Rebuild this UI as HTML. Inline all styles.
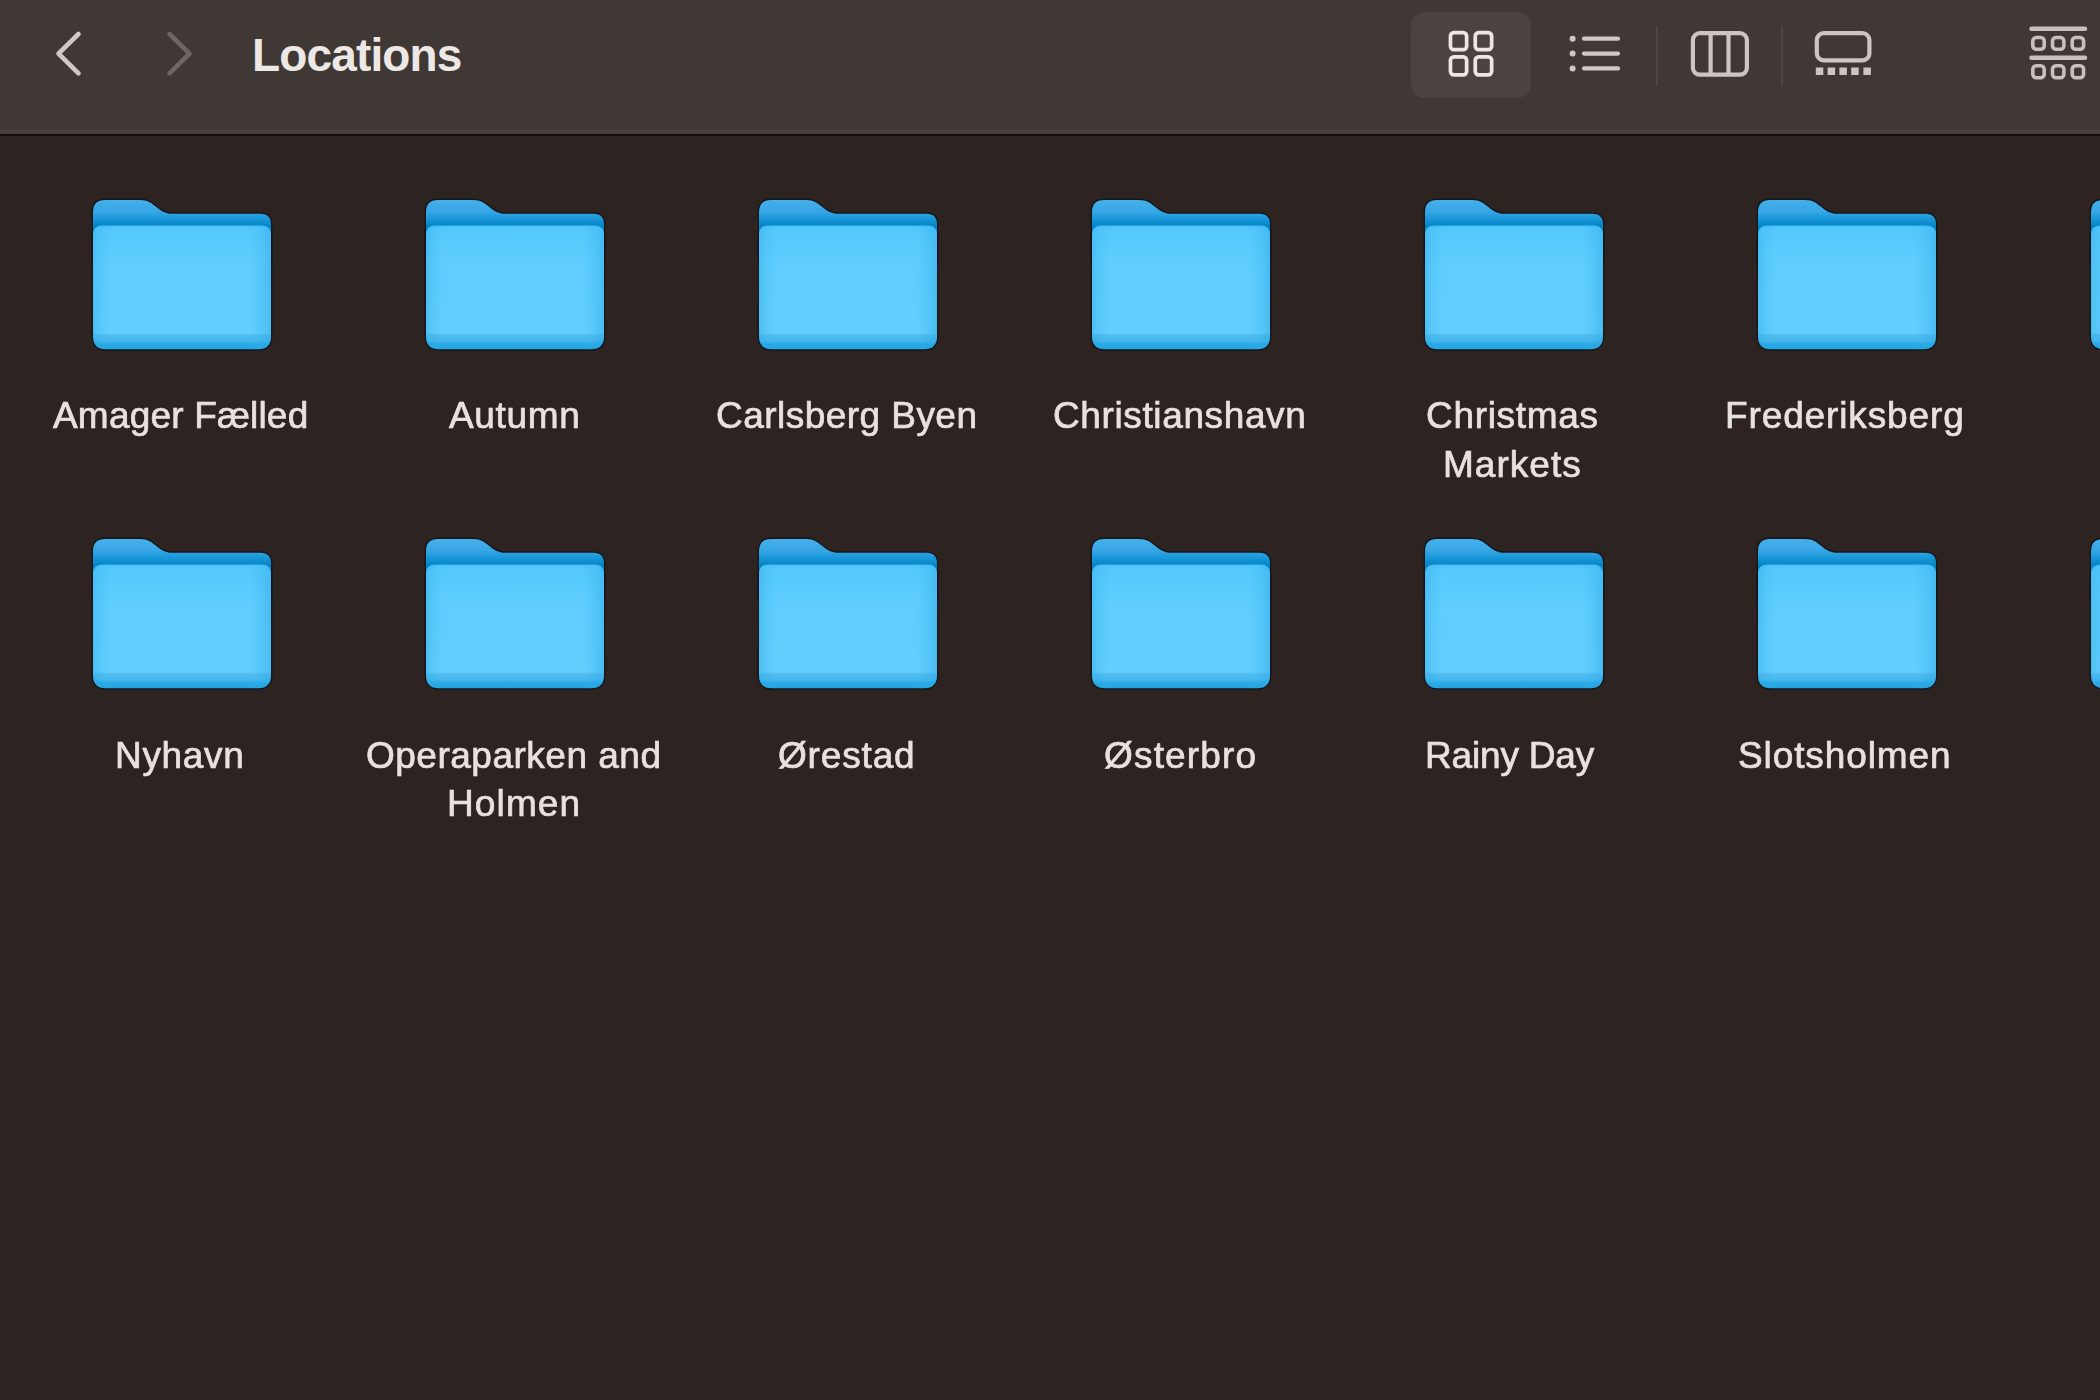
<!DOCTYPE html>
<html><head><meta charset="utf-8"><style>
html,body{margin:0;padding:0;width:2100px;height:1400px;overflow:hidden;background:#2d2320;}
body{position:relative;font-family:"Liberation Sans",sans-serif;}
#tb{position:absolute;left:0;top:0;width:2100px;height:134px;background:#403834;}
#tbl1{position:absolute;left:0;top:130px;width:2100px;height:3px;background:#48403c;}
#tbl2{position:absolute;left:0;top:134px;width:2100px;height:2px;background:#150e0b;}
#title{position:absolute;left:252px;top:24.6px;font-weight:bold;font-size:46px;color:#ece8e5;letter-spacing:-0.85px;line-height:60px;white-space:nowrap;}
.sel{position:absolute;left:1411px;top:12px;width:120px;height:86px;border-radius:14px;background:#4b4340;}
.sep{position:absolute;top:26px;width:2px;height:60px;background:#4f4643;}
svg.ic{position:absolute;left:0;top:0;}
.fo{position:absolute;}
.lb{position:absolute;will-change:transform;white-space:nowrap;font-size:37px;line-height:48px;color:#e8e2df;-webkit-text-stroke:0.7px #e8e2df;}
</style></head><body>
<svg width="0" height="0" style="position:absolute">
<defs>
<linearGradient id="gb" gradientUnits="userSpaceOnUse" x1="0" y1="0" x2="0" y2="26">
<stop offset="0" stop-color="#46b0ea"/><stop offset="0.45" stop-color="#36a6e4"/><stop offset="0.75" stop-color="#1696d8"/><stop offset="1" stop-color="#0684c6"/>
</linearGradient>
<linearGradient id="gf" gradientUnits="userSpaceOnUse" x1="0" y1="25.5" x2="0" y2="149.3">
<stop offset="0" stop-color="#46bcf4"/><stop offset="0.02" stop-color="#54c8fc"/><stop offset="0.3" stop-color="#5ecdfd"/><stop offset="0.87" stop-color="#62cefd"/><stop offset="0.885" stop-color="#50bcee"/><stop offset="0.93" stop-color="#46b9ee"/><stop offset="0.96" stop-color="#28a8e4"/><stop offset="1" stop-color="#24a6e2"/>
</linearGradient>
<linearGradient id="gs" gradientUnits="userSpaceOnUse" x1="0" y1="0" x2="178" y2="0">
<stop offset="0" stop-color="#2aa6e6" stop-opacity="0.4"/><stop offset="0.03" stop-color="#2aa6e6" stop-opacity="0.2"/><stop offset="0.1" stop-color="#3ab4ee" stop-opacity="0"/><stop offset="0.88" stop-color="#3ab4ee" stop-opacity="0"/><stop offset="0.96" stop-color="#2aa6e6" stop-opacity="0.25"/><stop offset="1" stop-color="#2aa6e6" stop-opacity="0.45"/>
</linearGradient>
<g id="folder">
<g fill="none" stroke="#08121a" stroke-opacity="0.7" stroke-width="2.8">
<path d="M0,12 Q0,0 12,0 L47,0 C55,0 59,3.5 64,7.5 C69,11.5 73,13.8 80,13.8 L167.5,13.8 Q178,13.8 178,24.5 L178,60 L0,60 Z"/>
<path d="M0,35 Q0,25.5 9.5,25.5 L168.5,25.5 Q178,25.5 178,35 L178,136.3 Q178,149.3 165,149.3 L13,149.3 Q0,149.3 0,136.3 Z"/>
</g>
<path d="M0,12 Q0,0 12,0 L47,0 C55,0 59,3.5 64,7.5 C69,11.5 73,13.8 80,13.8 L167.5,13.8 Q178,13.8 178,24.5 L178,60 L0,60 Z" fill="url(#gb)"/>
<path d="M0,35 Q0,25.5 9.5,25.5 L168.5,25.5 Q178,25.5 178,35 L178,136.3 Q178,149.3 165,149.3 L13,149.3 Q0,149.3 0,136.3 Z" fill="url(#gf)"/>
<path d="M0,35 Q0,25.5 9.5,25.5 L168.5,25.5 Q178,25.5 178,35 L178,136.3 Q178,149.3 165,149.3 L13,149.3 Q0,149.3 0,136.3 Z" fill="url(#gs)"/>
</g>
</defs></svg>
<div id="tb"></div><div id="tbl1"></div><div id="tbl2"></div>
<svg class="ic" width="2100" height="134">
<polyline points="78.5,34 58.5,53.6 78.5,73.4" fill="none" stroke="#cfc8c4" stroke-width="4.6" stroke-linecap="round" stroke-linejoin="round"/>
<polyline points="169.5,34 189.5,53.6 169.5,73.4" fill="none" stroke="#6e6663" stroke-width="4.6" stroke-linecap="round" stroke-linejoin="round"/>
</svg>
<div id="title">Locations</div>
<div class="sel"></div>
<div class="sep" style="left:1656px"></div>
<div class="sep" style="left:1781px"></div>
<svg class="ic" width="2100" height="134">
<g fill="none" stroke="#ece7e3" stroke-width="3.7">
<rect x="1450.45" y="32.65" width="16.2" height="17" rx="3.5"/>
<rect x="1475.25" y="32.65" width="16.4" height="17" rx="3.5"/>
<rect x="1450.45" y="56.85" width="16.2" height="18" rx="3.5"/>
<rect x="1475.25" y="56.85" width="16.4" height="18" rx="3.5"/>
</g>
<g fill="#cfc8c4"><circle cx="1572.6" cy="38.7" r="3"/><circle cx="1572.6" cy="53.6" r="3"/><circle cx="1572.6" cy="68.4" r="3"/></g>
<g stroke="#cfc8c4" stroke-width="4.2" stroke-linecap="round">
<line x1="1584" y1="38.7" x2="1618" y2="38.7"/><line x1="1584" y1="53.6" x2="1618" y2="53.6"/><line x1="1584" y1="68.4" x2="1618" y2="68.4"/>
</g>
<g fill="none" stroke="#cdc5c1" stroke-width="4.2">
<rect x="1692.9" y="33.1" width="54" height="41.6" rx="7"/>
<line x1="1710.6" y1="33" x2="1710.6" y2="75"/><line x1="1728.5" y1="33" x2="1728.5" y2="75"/>
<rect x="1816.8" y="33.2" width="52.6" height="27.2" rx="7"/>
</g>
<g fill="#cdc5c1">
<rect x="1815.8" y="67.5" width="7.5" height="7.5"/><rect x="1827.6" y="67.5" width="7.5" height="7.5"/><rect x="1839.4" y="67.5" width="7.5" height="7.5"/><rect x="1851.2" y="67.5" width="7.5" height="7.5"/><rect x="1863.4" y="67.5" width="7.5" height="7.5"/>
</g>
<g stroke="#c8c0bc" fill="none">
<line x1="2031.5" y1="28.7" x2="2085" y2="28.7" stroke-width="4.5" stroke-linecap="round"/>
<line x1="2031.5" y1="57.7" x2="2085" y2="57.7" stroke-width="4.5" stroke-linecap="round"/>
<g stroke-width="3.6">
<rect x="2032.8" y="37.5" width="11.4" height="11.7" rx="3.5"/><rect x="2052.5" y="37.5" width="11.4" height="11.7" rx="3.5"/><rect x="2072.2" y="37.5" width="11.4" height="11.7" rx="3.5"/>
<rect x="2032.8" y="65.7" width="11.4" height="12.1" rx="3.5"/><rect x="2052.5" y="65.7" width="11.4" height="12.1" rx="3.5"/><rect x="2072.2" y="65.7" width="11.4" height="12.1" rx="3.5"/>
</g></g>
</svg>
<svg class="fo" style="left:87px;top:193.5px" width="190" height="162" viewBox="-6 -6 190 162"><use href="#folder"/></svg><svg class="fo" style="left:420px;top:193.5px" width="190" height="162" viewBox="-6 -6 190 162"><use href="#folder"/></svg><svg class="fo" style="left:753px;top:193.5px" width="190" height="162" viewBox="-6 -6 190 162"><use href="#folder"/></svg><svg class="fo" style="left:1086px;top:193.5px" width="190" height="162" viewBox="-6 -6 190 162"><use href="#folder"/></svg><svg class="fo" style="left:1419px;top:193.5px" width="190" height="162" viewBox="-6 -6 190 162"><use href="#folder"/></svg><svg class="fo" style="left:1752px;top:193.5px" width="190" height="162" viewBox="-6 -6 190 162"><use href="#folder"/></svg><svg class="fo" style="left:2085px;top:193.5px" width="190" height="162" viewBox="-6 -6 190 162"><use href="#folder"/></svg><svg class="fo" style="left:87px;top:532.5px" width="190" height="162" viewBox="-6 -6 190 162"><use href="#folder"/></svg><svg class="fo" style="left:420px;top:532.5px" width="190" height="162" viewBox="-6 -6 190 162"><use href="#folder"/></svg><svg class="fo" style="left:753px;top:532.5px" width="190" height="162" viewBox="-6 -6 190 162"><use href="#folder"/></svg><svg class="fo" style="left:1086px;top:532.5px" width="190" height="162" viewBox="-6 -6 190 162"><use href="#folder"/></svg><svg class="fo" style="left:1419px;top:532.5px" width="190" height="162" viewBox="-6 -6 190 162"><use href="#folder"/></svg><svg class="fo" style="left:1752px;top:532.5px" width="190" height="162" viewBox="-6 -6 190 162"><use href="#folder"/></svg><svg class="fo" style="left:2085px;top:532.5px" width="190" height="162" viewBox="-6 -6 190 162"><use href="#folder"/></svg><div class="lb" style="left:53.0px;top:391.5px;letter-spacing:0.19px">Amager Fælled</div><div class="lb" style="left:448.5px;top:391.5px;letter-spacing:0.66px">Autumn</div><div class="lb" style="left:715.8px;top:391.5px;letter-spacing:0.46px">Carlsberg Byen</div><div class="lb" style="left:1052.8px;top:391.5px;letter-spacing:0.62px">Christianshavn</div><div class="lb" style="left:1425.5px;top:392.0px;letter-spacing:0.69px">Christmas</div><div class="lb" style="left:1442.7px;top:440.5px;letter-spacing:1.02px">Markets</div><div class="lb" style="left:1725.2px;top:391.5px;letter-spacing:0.88px">Frederiksberg</div><div class="lb" style="left:115.2px;top:731.5px;letter-spacing:0.66px">Nyhavn</div><div class="lb" style="left:365.5px;top:732.0px;letter-spacing:0.50px">Operaparken and</div><div class="lb" style="left:446.7px;top:780.0px;letter-spacing:1.12px">Holmen</div><div class="lb" style="left:777.8px;top:731.5px;letter-spacing:0.84px">Ørestad</div><div class="lb" style="left:1103.5px;top:731.5px;letter-spacing:1.18px">Østerbro</div><div class="lb" style="left:1425.4px;top:731.5px;letter-spacing:-0.18px">Rainy Day</div><div class="lb" style="left:1738.0px;top:731.5px;letter-spacing:0.90px">Slotsholmen</div>
</body></html>
